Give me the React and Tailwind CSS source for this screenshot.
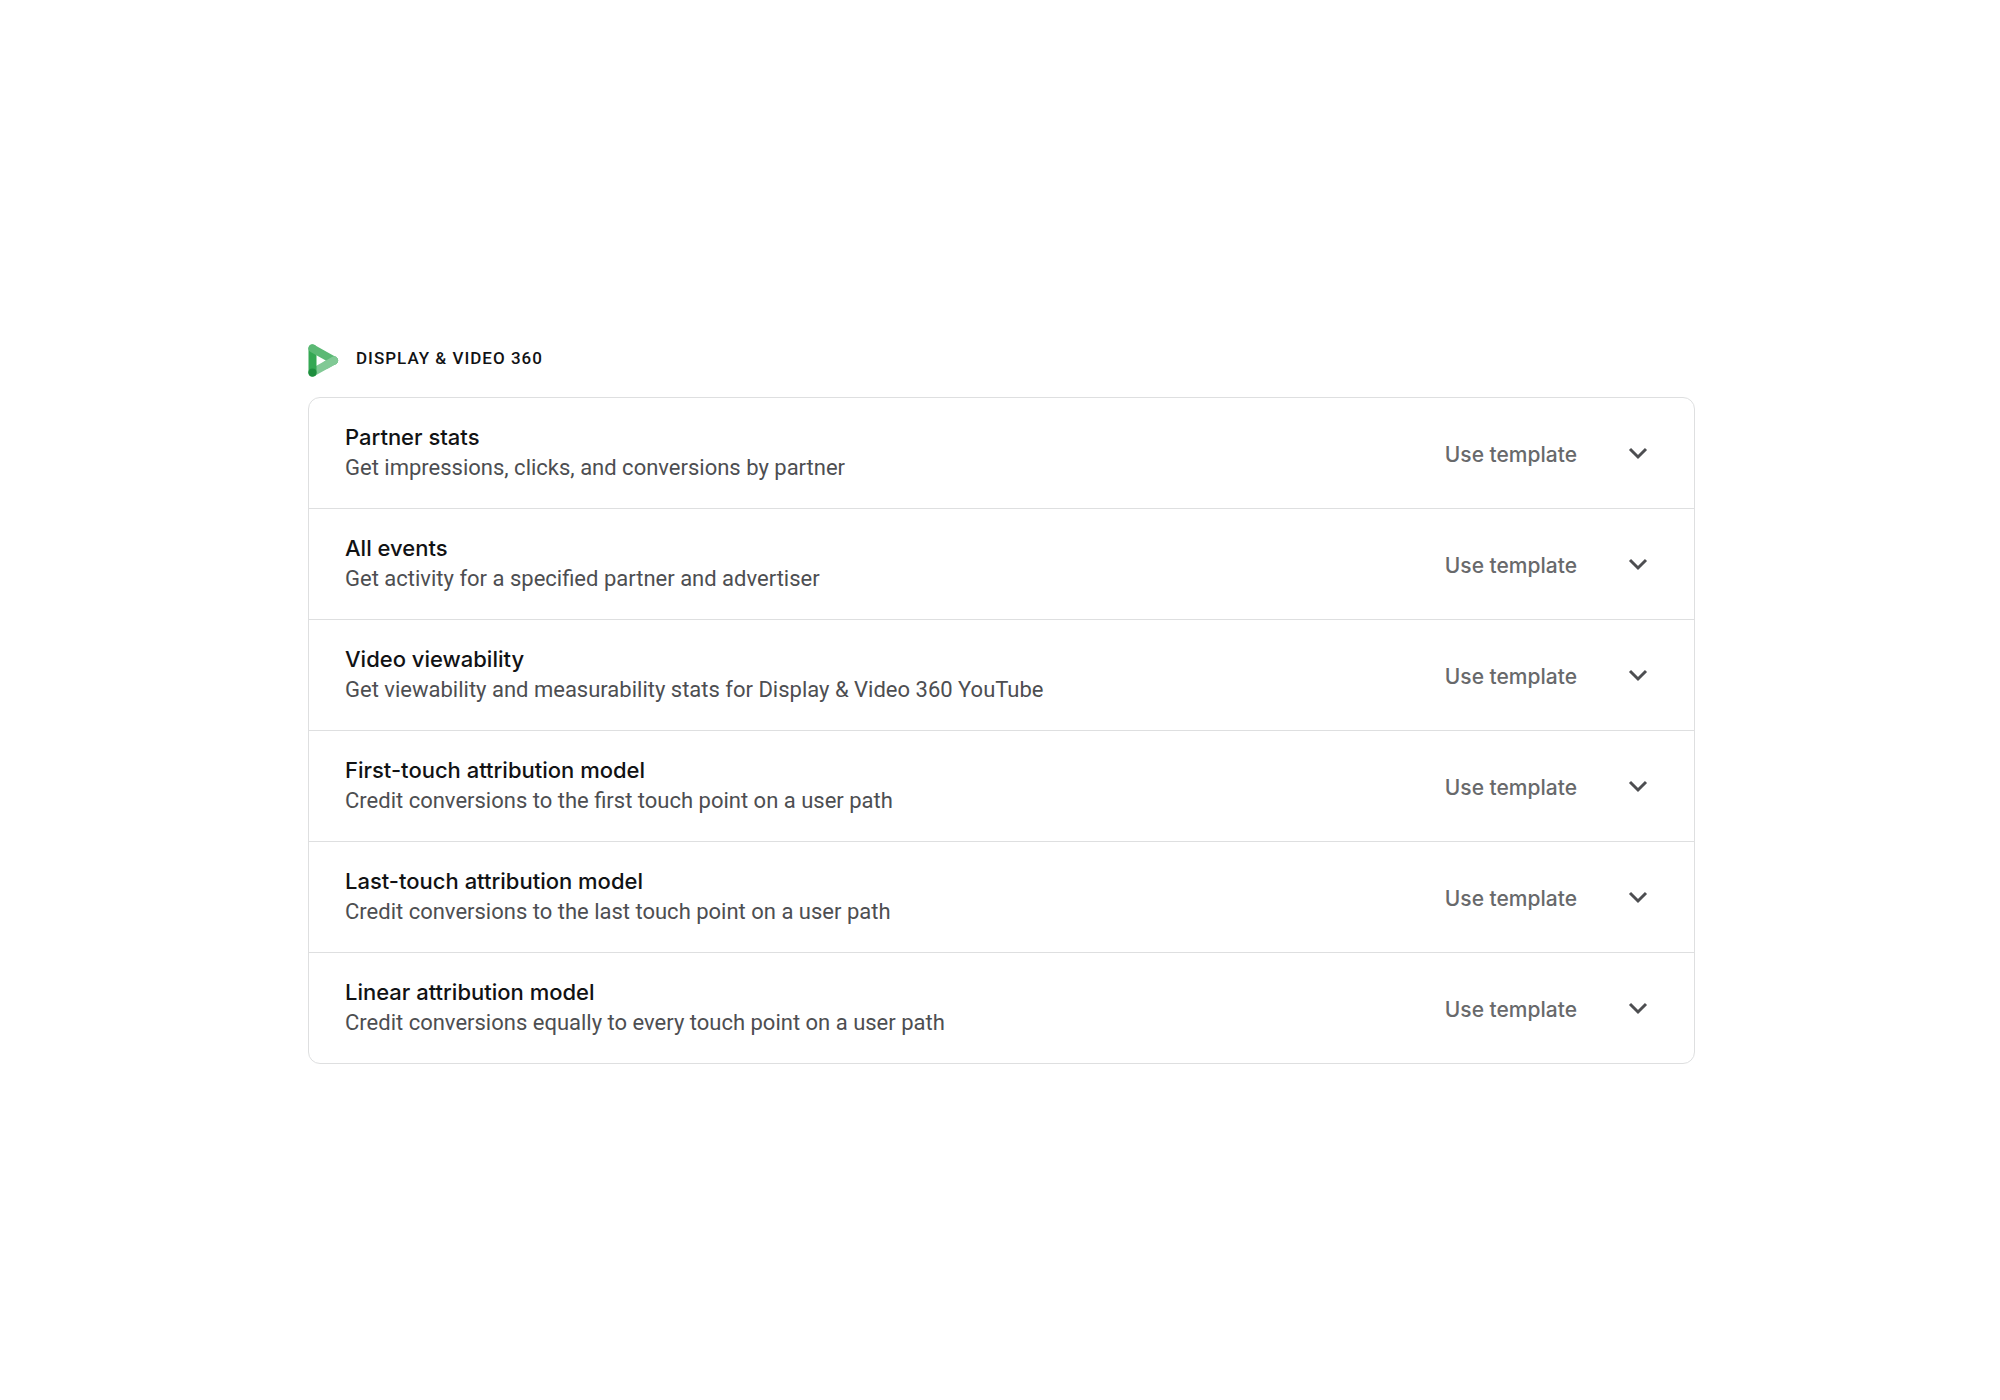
const templates = [
  { title: 'Partner stats', description: 'Get impressions, clicks, and conversions by partner' },
  { title: 'All events', description: 'Get activity for a specified partner and advertiser' },
  { title: 'Video viewability', description: 'Get viewability and measurability stats for Display & Video 360 YouTube' },
  { title: 'First-touch attribution model', description: 'Credit conversions to the first touch point on a user path' },
  { title: 'Last-touch attribution model', description: 'Credit conversions to the last touch point on a user path' },
  { title: 'Linear attribution model', description: 'Credit conversions equally to every touch point on a user path' },
];

function ProductLogo() {
  return (
    <svg className="h-[33px] w-[31px] shrink-0" viewBox="0 0 31 33" fill="none" strokeWidth="8" strokeLinecap="round" aria-hidden="true">
      <path d="M4.5 28.5 26 16.5" stroke="#81c995" />
      <path d="M4.5 4.5V28.5" stroke="#34a853" />
      <path d="M4.5 4.5 26 16.5" stroke="#5bb974" />
      <path d="m18 21 8-4.5" stroke="#81c995" />
      <circle cx="4.5" cy="28.5" r="4" fill="#1e8e3e" />
    </svg>
  );
}

function Chevron() {
  return (
    <svg className="h-6 w-6" viewBox="0 0 24 24" fill="none" stroke="currentColor" strokeWidth="3" aria-hidden="true">
      <path d="m4 8 8 8 8-8" />
    </svg>
  );
}

function TemplateRow({ title, description }) {
  return (
    <li className="flex min-h-[111px] items-center justify-between gap-6 border-b border-[#dedfe0] pr-11 pl-9 last:min-h-[110px] last:border-b-0">
      <div className="min-w-0">
        <h3 className="font-['Inter',sans-serif] text-[22px] leading-[30px] font-medium text-[#111214]">{title}</h3>
        <p className="text-[22px] leading-8 text-[#4d4e51]">{description}</p>
      </div>
      <div className="flex shrink-0 items-center gap-[49px]">
        <button type="button" className="pt-1 font-['Inter',sans-serif] text-[21px] leading-[30px] font-medium text-[#68696b]">
          Use template
        </button>
        <button type="button" aria-label={`Expand ${title}`} className="text-[#4d4e51]">
          <Chevron />
        </button>
      </div>
    </li>
  );
}

export default function App() {
  return (
    <main className="min-h-screen bg-white px-4 py-16 font-['Roboto',sans-serif] xl:pt-[344px] xl:pr-[305px] xl:pl-[308px]">
      <header className="mb-5 flex items-center gap-[17px]">
        <ProductLogo />
        <h2 className="pb-1.5 text-[17px] leading-6 font-medium tracking-[1px] text-[#111214] uppercase">Display &amp; Video 360</h2>
      </header>
      <ul className="rounded-xl border border-[#dedfe0]">
        {templates.map((t) => (
          <TemplateRow key={t.title} {...t} />
        ))}
      </ul>
    </main>
  );
}
